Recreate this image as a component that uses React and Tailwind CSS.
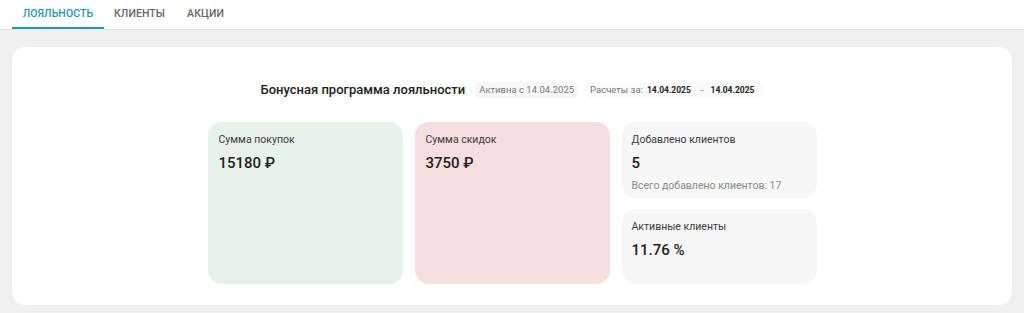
import React from 'react';

const tabs = ['Лояльность', 'Клиенты', 'Акции'];

function StatCard({ title, value, note, className }) {
    return (
        <div className={`rounded-[14px] px-[11px] pt-[11px] ${className}`}>
            <div className="text-[10.5px] leading-[14px] text-[#3a3a3a]">{title}</div>
            <div className="mt-[7px] text-[15px] leading-[18px] font-medium text-[#222]">{value}</div>
            {note && <div className="mt-[7px] text-[10.5px] leading-[14px] text-[#8a8a8a]">{note}</div>}
        </div>
    );
}

export default function App() {
    const [active, setActive] = React.useState(0);

    return (
        <div className="min-h-[313px] bg-[#f0f0f0] font-['Roboto','Liberation_Sans',sans-serif]">
            {/* Tabs */}
            <div className="h-[30px] bg-white border-b border-[#e6e6e6] flex pl-[12px]">
                {tabs.map((t, i) => (
                    <button
                        key={t}
                        onClick={() => setActive(i)}
                        className={`h-full px-[10px] text-[10.5px] font-medium uppercase tracking-[0.01em] border-b-2 ${
                            i === active ? 'text-[#1a9aa8] border-[#1a9aa8]' : 'text-[#666] border-transparent'
                        } ${i === 0 ? 'w-[92px]' : i === 2 ? 'ml-[2px]' : ''}`}
                    >
                        {t}
                    </button>
                ))}
            </div>

            <div className="px-[12px] pt-[17px] pb-[7px]">
                <div className="bg-white rounded-[14px] h-[258px] pt-[33px] flex flex-col items-center">
                    {/* Header */}
                    <div className="flex items-center h-[20px]">
                        <h2 className="text-[13px] font-medium text-[#222] mr-[10px]">Бонусная программа лояльности</h2>
                        <span className="bg-[#f7f7f7] rounded-[3px] px-[4px] h-[16px] flex items-center text-[9.5px] text-[#777] mr-[8px]">
                            Активна с 14.04.2025
                        </span>
                        <span className="bg-[#fafafa] rounded-[3px] px-[4px] h-[16px] flex items-center text-[9.5px] text-[#777]">
                            Расчеты за:
                            <span className="ml-[4px] text-[8.5px] text-[#222] font-bold">14.04.2025</span>
                            <span className="ml-[10px] mr-[7px] text-[#777]">-</span>
                            <span className="text-[8.5px] text-[#222] font-bold pr-[5px]">14.04.2025</span>
                        </span>
                    </div>

                    {/* Stats */}
                    <div className="mt-[22px] grid grid-cols-[195px_195px_195px] gap-x-[12px] h-[162px]">
                        <StatCard title="Сумма покупок" value="15180 ₽" className="bg-[#e7f3e8]" />
                        <StatCard title="Сумма скидок" value="3750 ₽" className="bg-[#f5dfdf]" />
                        <div className="flex flex-col gap-[11px]">
                            <StatCard
                                title="Добавлено клиентов"
                                value="5"
                                note="Всего добавлено клиентов: 17"
                                className="bg-[#f7f7f7] h-[76px] !px-[10px]"
                            />
                            <StatCard title="Активные клиенты" value="11.76 %" className="bg-[#f7f7f7] flex-1 !px-[10px]" />
                        </div>
                    </div>
                </div>
            </div>
        </div>
    );
}
